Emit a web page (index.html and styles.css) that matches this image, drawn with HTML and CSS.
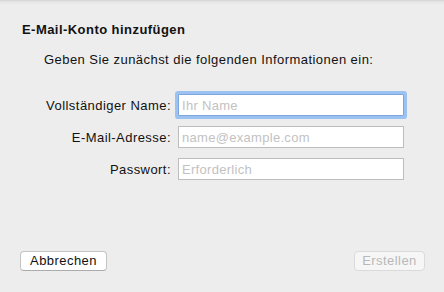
FILE: index.html
```html
<!DOCTYPE html>
<html lang="de">
<head>
<meta charset="utf-8">
<link rel="stylesheet" href="styles.css">
</head>
<body>
<div class="dialog">
  <h1 class="title">E-Mail-Konto hinzufügen</h1>
  <p class="intro">Geben Sie zunächst die folgenden Informationen ein:</p>
  <div class="form">
    <label class="label" for="n">Vollständiger Name:</label>
    <div class="field focused"><input id="n" class="input" placeholder="Ihr Name"></div>
    <label class="label" for="e">E-Mail-Adresse:</label>
    <div class="field"><input id="e" class="input" placeholder="name@example.com"></div>
    <label class="label" for="p">Passwort:</label>
    <div class="field"><input id="p" class="input" placeholder="Erforderlich"></div>
  </div>
  <div class="actions">
    <button class="btn cancel">Abbrechen</button>
    <button class="btn create" disabled>Erstellen</button>
  </div>
</div>
</body>
</html>
```
FILE: styles.css
```css
html, body {
  margin: 0;
  padding: 0;
  background: #ededed;
}
body {
  font-family: "Liberation Sans", Arial, sans-serif;
  font-size: 13px;
  letter-spacing: 0.45px;
  color: #000;
}
.dialog {
  box-sizing: border-box;
  width: 444px;
  height: 292px;
  display: flex;
  flex-direction: column;
  padding: 22px 20px 21px 20px;
  background: linear-gradient(to bottom, #d4d4d4 0px, #e6e6e6 2px, #ededed 5px);
}
.title {
  margin: 0 0 0 2px;
  font-size: 13px;
  line-height: 16px;
  font-weight: bold;
  color: #111;
}
.intro {
  margin: 14px 0 0 24px;
  line-height: 16px;
  color: #111;
}
.form {
  margin-top: 26px;
  display: grid;
  grid-template-columns: 150px 226px;
  column-gap: 8px;
  row-gap: 10px;
  align-items: center;
}
.label {
  text-align: right;
  line-height: 16px;
  padding-top: 1px;
  color: #111;
  margin-right: -1px;
}
.field {
  height: 22px;
  box-sizing: border-box;
  border: 1px solid #bdbdbd;
  background: #fff;
  display: flex;
}
.field.focused {
  border-color: #7ea6dc;
  box-shadow: 0 0 0 3px #9cc2f2;
  border-radius: 1px;
}
.input {
  flex: 1;
  min-width: 0;
  border: 0;
  outline: none;
  background: transparent;
  padding: 1px 3px 0 3px;
  font: inherit;
  font-size: 13px;
  letter-spacing: 0.3px;
  color: #000;
}
.input::placeholder {
  color: #c2c2c2;
}
.actions {
  margin-top: auto;
  display: flex;
  justify-content: space-between;
}
.btn {
  height: 20px;
  box-sizing: border-box;
  padding: 0;
  font: inherit;
  font-size: 13px;
  letter-spacing: 0.45px;
  line-height: 18px;
  border-radius: 4px;
  background: #fff;
  border: 1px solid #c4c4c4;
  border-bottom-color: #ababab;
  color: #111;
}
.cancel {
  width: 87px;
}
.create {
  width: 71px;
  margin-right: -1px;
  background: #f6f6f6;
  border-color: #dadada;
  color: #b8b8b8;
}
```
